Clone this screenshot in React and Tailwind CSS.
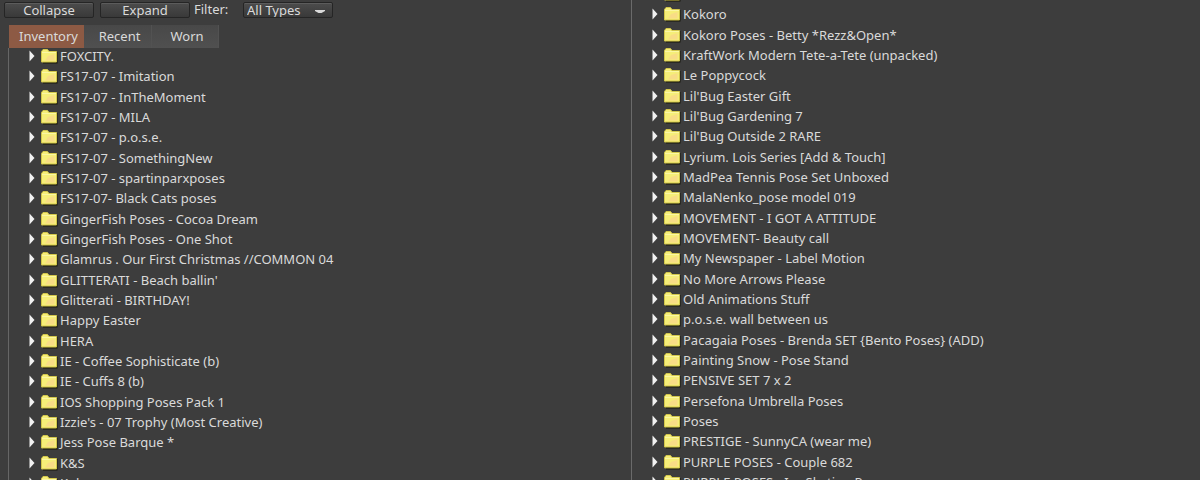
import React from "react";

const inventory = [
  "FOXCITY.",
  "FS17-07 - Imitation",
  "FS17-07 - InTheMoment",
  "FS17-07 - MILA",
  "FS17-07 - p.o.s.e.",
  "FS17-07 - SomethingNew",
  "FS17-07 - spartinparxposes",
  "FS17-07- Black Cats poses",
  "GingerFish Poses - Cocoa Dream",
  "GingerFish Poses - One Shot",
  "Glamrus . Our First Christmas //COMMON 04",
  "GLITTERATI - Beach ballin'",
  "Glitterati - BIRTHDAY!",
  "Happy Easter",
  "HERA",
  "IE - Coffee Sophisticate (b)",
  "IE - Cuffs 8 (b)",
  "IOS Shopping Poses Pack 1",
  "Izzie's - 07 Trophy (Most Creative)",
  "Jess Pose Barque *",
  "K&S",
  "Kokoro",
];

const continued = [
  "",
  "Kokoro",
  "Kokoro Poses - Betty *Rezz&Open*",
  "KraftWork Modern Tete-a-Tete (unpacked)",
  "Le Poppycock",
  "Lil'Bug Easter Gift",
  "Lil'Bug Gardening 7",
  "Lil'Bug Outside 2 RARE",
  "Lyrium. Lois Series [Add & Touch]",
  "MadPea Tennis Pose Set Unboxed",
  "MalaNenko_pose model 019",
  "MOVEMENT - I GOT A ATTITUDE",
  "MOVEMENT- Beauty call",
  "My Newspaper - Label Motion",
  "No More Arrows Please",
  "Old Animations Stuff",
  "p.o.s.e. wall between us",
  "Pacagaia Poses - Brenda SET {Bento Poses} (ADD)",
  "Painting Snow - Pose Stand",
  "PENSIVE SET 7 x 2",
  "Persefona Umbrella Poses",
  "Poses",
  "PRESTIGE - SunnyCA (wear me)",
  "PURPLE POSES - Couple 682",
  "PURPLE POSES - Ice Skating Poses",
];

function FolderIcon() {
  return (
    <svg viewBox="0 0 17 16" className="h-4 w-[17px] shrink-0" aria-hidden="true">
      <path d="M2 4h14.5v11.5H2z" fill="#17170c" />
      <path d="M0.5 14V3.5L2 1.5h4.5L8 3.5h7.5V14z" fill="#f6ee78" stroke="#d2c64a" strokeWidth="1" />
      <path d="M4 12.5 7 8l6.5-2v6.5z" fill="#f8dc86" />
      <path d="M1 4.5h14" stroke="#fbf7a4" strokeWidth="1" />
    </svg>
  );
}

function FolderList({ items }) {
  return (
    <ul className="[&>li:nth-child(3n)]:h-[21px]">
      {items.map((name, i) => (
        <li key={i} className="flex h-5 items-center">
          <button type="button" aria-label={name || "Folder"} className="flex items-center leading-4 whitespace-nowrap">
            <svg viewBox="0 0 6 12" className="mr-1.5 h-3 w-1.5 shrink-0" aria-hidden="true">
              <path d="M0.5 0.5 5.5 6 0.5 11.5z" fill="#f2f2f2" />
            </svg>
            <FolderIcon />
            <span className="ml-0.5">{name}</span>
          </button>
        </li>
      ))}
    </ul>
  );
}

const buttonLook =
  "h-4 rounded-xs border border-[#252525] bg-linear-to-b from-[#4c4c4c] to-[#393939] leading-[14px] shadow-[inset_0_1px_0_#5c5c5c]";

const tabLook = "h-[23px] border-r border-[#525252] bg-linear-to-b from-[#484848] to-[#505050] pl-1";

export default function App() {
  return (
    <div className="grid h-screen grid-cols-[631fr_569fr] overflow-hidden bg-[#3d3d3d] font-['Noto_Sans',sans-serif] text-[13px] text-[#dadada]">
      <section className="flex min-h-0 flex-col overflow-hidden">
        <div className="flex items-start pt-0.5 pl-1">
          <button type="button" className={`${buttonLook} w-[90px]`}>Collapse</button>
          <button type="button" className={`${buttonLook} ml-1.5 w-[90px]`}>Expand</button>
          <label htmlFor="filter" className="ml-1 w-[49px] leading-[14px]">Filter:</label>
          <div className="relative flex">
            <select id="filter" className={`${buttonLook} w-[90px] appearance-none pl-[3px]`}>
              <option>All Types</option>
            </select>
            <svg viewBox="0 0 10 4" className="pointer-events-none absolute top-2 right-2 h-1 w-2.5" aria-hidden="true">
              <path d="M0 0h10v1L6.500 3h-3L0 1z" fill="#dadada" />
            </svg>
          </div>
        </div>
        <div className="mt-[7px] ml-[9px] flex" role="tablist">
          <button type="button" role="tab" aria-selected="true" className="h-[23px] w-[75px] bg-[#8d5a44] pl-1">Inventory</button>
          <button type="button" role="tab" aria-selected="false" className={`${tabLook} w-[68px]`}>Recent</button>
          <button type="button" role="tab" aria-selected="false" className={`${tabLook} w-[67px]`}>Worn</button>
        </div>
        <div className="ml-2 min-h-0 flex-1 overflow-hidden border-l border-[#666] pl-5">
          <div className="-mt-0.5">
            <FolderList items={inventory} />
          </div>
        </div>
      </section>
      <section className="overflow-hidden border-l border-[#6a6a6a] pl-5">
        <div className="-mt-4">
          <FolderList items={continued} />
        </div>
      </section>
    </div>
  );
}
